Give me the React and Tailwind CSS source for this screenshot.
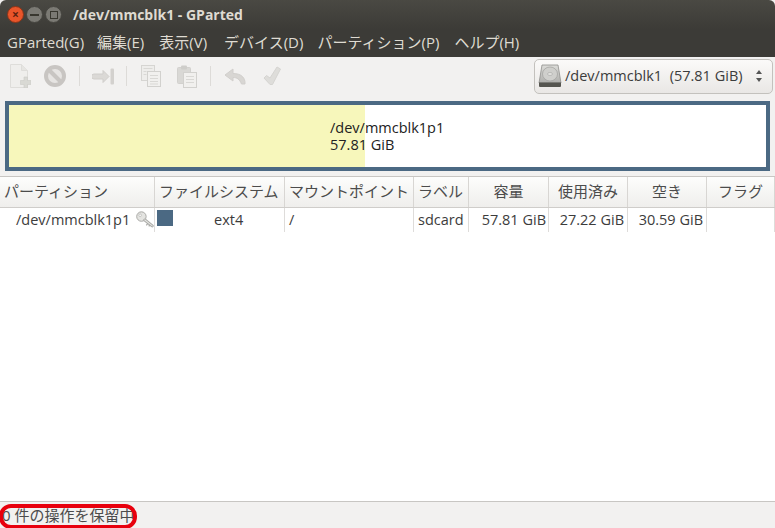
const sans = { fontFamily: '"Open Sans","Noto Sans CJK JP",sans-serif' };

const cols = "grid grid-cols-[155px_130px_129px_55px_80px_79px_79px_68px]";

function Head({ children, center }) {
  return (
    <div className={`h-[30px] pb-[2px] flex items-center border-r border-[#d8d6d3] text-[15px] text-[#4c4c4c] whitespace-nowrap overflow-hidden ${center ? "justify-center" : "pl-[4px]"}`}>
      {children}
    </div>
  );
}

function Cell({ children, className = "" }) {
  return (
    <div className={`h-[24px] pb-[1px] flex items-center border-r border-[#dedcda] text-[14.5px] text-[#3c3c3c] whitespace-nowrap ${className}`}>
      {children}
    </div>
  );
}

function NewIcon() {
  return (
    <svg width="21" height="24" viewBox="0 0 21 24">
      <path d="M.5.5h11l6 6v17H.5z" fill="#efeeec" stroke="#dedddA" />
      <path d="M11.5.5v6h6" fill="#e6e5e2" stroke="#dedddA" />
      <path d="M14 13h3.5v3.5H21v4h-3.5V24H14v-3.5h-3.5v-4H14z" fill="#d9d9d4" stroke="#cbcbc6" strokeWidth="0.6" />
    </svg>
  );
}
function DeleteIcon() {
  return (
    <svg width="22" height="22" viewBox="0 0 22 22">
      <circle cx="11" cy="11" r="9" fill="#e6e4e2" stroke="#c8c5c2" strokeWidth="4" />
      <path d="M5 5l12 12" stroke="#c8c5c2" strokeWidth="4" />
    </svg>
  );
}
function ApplyPartIcon() {
  return (
    <svg width="22" height="17" viewBox="0 0 22 17">
      <path d="M2 6h9V2.500L17 8.500 11 14.500V11H2a2.500 2.500 0 0 1 0-5z" fill="#dbd9d6" stroke="#d0cecb" strokeLinejoin="round" />
      <rect x="18.500" y="0.500" width="3.500" height="16" rx="1" fill="#d3d1ce" />
    </svg>
  );
}
function CopyIcon() {
  return (
    <svg width="20" height="22" viewBox="0 0 20 22">
      <rect x="0.500" y="0.500" width="13" height="15" fill="#eeedeb" stroke="#d6d5d2" />
      <rect x="6.500" y="6.500" width="13" height="15" fill="#f1f0ee" stroke="#d2d1ce" />
      <path d="M2.500 3.500h9M2.500 6.500h3M2.500 9.500h3M9 10.500h8M9 13.500h8M9 16.500h8M9 19h8" stroke="#d9d8d5" />
    </svg>
  );
}
function PasteIcon() {
  return (
    <svg width="20" height="23" viewBox="0 0 20 23">
      <rect x="0.500" y="2.500" width="13" height="16" rx="1" fill="#d9d8d5" stroke="#d2d1ce" />
      <rect x="4" y="0.500" width="6" height="4" rx="1" fill="#cecdca" />
      <rect x="6.500" y="7.500" width="13" height="15" fill="#f1f0ee" stroke="#d2d1ce" />
      <path d="M9 11.500h8M9 14.500h8M9 17.500h8" stroke="#d9d8d5" />
    </svg>
  );
}
function UndoIcon() {
  return (
    <svg width="22" height="17" viewBox="0 0 22 17">
      <path d="M9 1L1 7l8 6V9.500c4 0 6.500 1.500 8.500 6.500H21c.5-6.500-4-10.500-12-10.500z" fill="#d8d6d3" stroke="#d1cfcc" strokeLinejoin="round" />
    </svg>
  );
}
function CheckIcon() {
  return (
    <svg width="18" height="20" viewBox="0 0 18 20">
      <path d="M1 12l2.500-2.500L7 12 14 1l3.500 2-8 15.500H7z" fill="#dedddA" stroke="#d5d4d1" strokeLinejoin="round" />
    </svg>
  );
}
function DiskIcon() {
  return (
    <svg width="24" height="24" viewBox="0 0 24 24">
      <defs>
        <linearGradient id="dsk" x1="0" y1="0" x2="0" y2="1">
          <stop offset="0" stopColor="#dcdcd9" />
          <stop offset="1" stopColor="#aeaeab" />
        </linearGradient>
      </defs>
      <path d="M4 1h16l3 18H1z" fill="url(#dsk)" stroke="#8e8e8b" strokeWidth="0.8" />
      <ellipse cx="12" cy="10" rx="7.500" ry="7" fill="#cfcfcc" stroke="#9f9f9c" strokeWidth="0.7" />
      <ellipse cx="12" cy="10" rx="2.500" ry="1.500" fill="#e2e2df" stroke="#9f9f9c" strokeWidth="0.5" />
      <path d="M1 18.500h22v3.500a1 1 0 0 1-1 1H2a1 1 0 0 1-1-1z" fill="#55554f" />
    </svg>
  );
}
function KeyIcon() {
  return (
    <svg width="18" height="17" viewBox="0 0 18 17">
      <circle cx="5.500" cy="5.500" r="4.800" fill="#e4e4e1" stroke="#a8a8a5" />
      <circle cx="4.200" cy="4.200" r="1.300" fill="#fff" stroke="#a8a8a5" strokeWidth="0.6" />
      <path d="M9 9l7.500 6" stroke="#a8a8a5" strokeWidth="3" strokeLinecap="round" />
      <path d="M9 9l7.500 6" stroke="#e4e4e1" strokeWidth="1.200" strokeLinecap="round" />
      <path d="M12 12.500l-1.500 2M14 14l-1 1.500" stroke="#a8a8a5" strokeWidth="1.200" />
    </svg>
  );
}
function Sep() {
  return <div className="w-px h-[20px] bg-[#dddbd8]" />;
}

export default function App() {
  return (
    <div className="w-[775px] h-[528px] flex flex-col overflow-hidden bg-[#f2f1f0] relative" style={sans}>
      <div className="h-[29px] shrink-0 flex items-center bg-gradient-to-b from-[#4a4943] to-[#3c3b37] rounded-t-[6px] pl-[7px]">
        <div className="flex items-center gap-[2px]">
          <div className="w-[17px] h-[17px] rounded-full bg-[#e9552a] border border-[#8a3418] flex items-center justify-center text-[12px] leading-none font-bold text-[#5c2110]">×</div>
          <div className="w-[17px] h-[17px] rounded-full bg-[#7b7a74] border border-[#45443f] flex items-center justify-center"><div className="w-[9px] h-[2px] bg-[#38372f]" /></div>
          <div className="w-[17px] h-[17px] rounded-full bg-[#7b7a74] border border-[#45443f] flex items-center justify-center"><div className="w-[8px] h-[8px] border border-[#38372f]" /></div>
        </div>
        <div className="ml-[11px] text-[14px] font-bold text-[#dfdbd2] whitespace-nowrap">/dev/mmcblk1 - GParted</div>
      </div>

      <div className="h-[28px] shrink-0 flex items-center pb-[1px] bg-[#3c3b37] text-[15px] text-[#dfdbd2] whitespace-nowrap pl-[7px] gap-[15px]">
        <span className="-mr-[2px]">GParted(G)</span>
        <span>編集(E)</span>
        <span>表示(V)</span>
        <span className="ml-[2px]">デバイス(D)</span>
        <span className="-ml-px">パーティション(P)</span>
        <span>ヘルプ(H)</span>
      </div>

      <div className="h-[43px] shrink-0 flex items-center pb-[5px] pl-[10px] pr-[2px] bg-[#f2f1f0]">
        <NewIcon />
        <div className="ml-[13px]"><DeleteIcon /></div>
        <div className="ml-[13px]"><Sep /></div>
        <div className="ml-[12px]"><ApplyPartIcon /></div>
        <div className="ml-[12px]"><Sep /></div>
        <div className="ml-[14px]"><CopyIcon /></div>
        <div className="ml-[16px]"><PasteIcon /></div>
        <div className="ml-[13px]"><Sep /></div>
        <div className="ml-[13px]"><UndoIcon /></div>
        <div className="ml-[17px]"><CheckIcon /></div>
        <div className="ml-auto w-[239px] h-[35px] rounded-[5px] border border-[#c3c1bd] bg-gradient-to-b from-[#fbfaf9] to-[#e9e7e5] flex items-center pl-[3px] pr-[10px]">
          <DiskIcon />
          <span className="text-[14.5px] text-[#3c3c3c] whitespace-pre ml-[3px]">/dev/mmcblk1  (57.81 GiB)</span>
          <div className="ml-auto flex flex-col gap-[4px]">
            <div className="w-0 h-0 border-x-[3px] border-x-transparent border-b-[4px] border-b-[#555]" />
            <div className="w-0 h-0 border-x-[3px] border-x-transparent border-t-[4px] border-t-[#555]" />
          </div>
        </div>
      </div>

      <div className="shrink-0 px-[5px] pb-[5px] mt-[1px]">
        <div className="h-[70px] border-[4px] border-[#4b6983] bg-white flex">
          <div className="w-[356px] bg-[#f7f7bb]" />
          <div className="-ml-[35px] pt-[14px] text-[14.5px] leading-[17px] text-[#222] whitespace-nowrap">
            <div>/dev/mmcblk1p1</div>
            <div>57.81 GiB</div>
          </div>
        </div>
      </div>

      <div className="flex-1 min-h-0 bg-white border-y border-[#c8c6c3]">
        <div className={`${cols} bg-gradient-to-b from-[#fdfdfc] to-[#efeeec] border-b border-[#cfcdca]`}>
          <Head>パーティション</Head>
          <Head>ファイルシステム</Head>
          <Head>マウントポイント</Head>
          <Head>ラベル</Head>
          <Head center>容量</Head>
          <Head center>使用済み</Head>
          <Head center>空き</Head>
          <Head center>フラグ</Head>
        </div>
        <div className={cols}>
          <Cell className="pl-[16px] gap-[6px]">/dev/mmcblk1p1<KeyIcon /></Cell>
          <Cell className="relative pl-[59px]">
            <div className="absolute left-[2px] top-[2px] w-[16px] h-[16px] bg-[#4b6983]" />
            ext4
          </Cell>
          <Cell className="pl-[4px]">/</Cell>
          <Cell className="pl-[4px]">sdcard</Cell>
          <Cell className="justify-end pr-[2px]">57.81 GiB</Cell>
          <Cell className="justify-end pr-[3px]">27.22 GiB</Cell>
          <Cell className="justify-end pr-[3px]">30.59 GiB</Cell>
          <Cell />
        </div>
      </div>

      <div className="h-[26px] shrink-0 relative flex items-center text-[15px] text-[#4c4c4c] whitespace-nowrap">
        <span className="pl-[2px]">0 件の操作を保留中</span>
        <div className="absolute -left-px top-[2px] w-[138px] h-[25px] rounded-[12px] border-[4px] border-[#e8000d]" />
      </div>
    </div>
  );
}
